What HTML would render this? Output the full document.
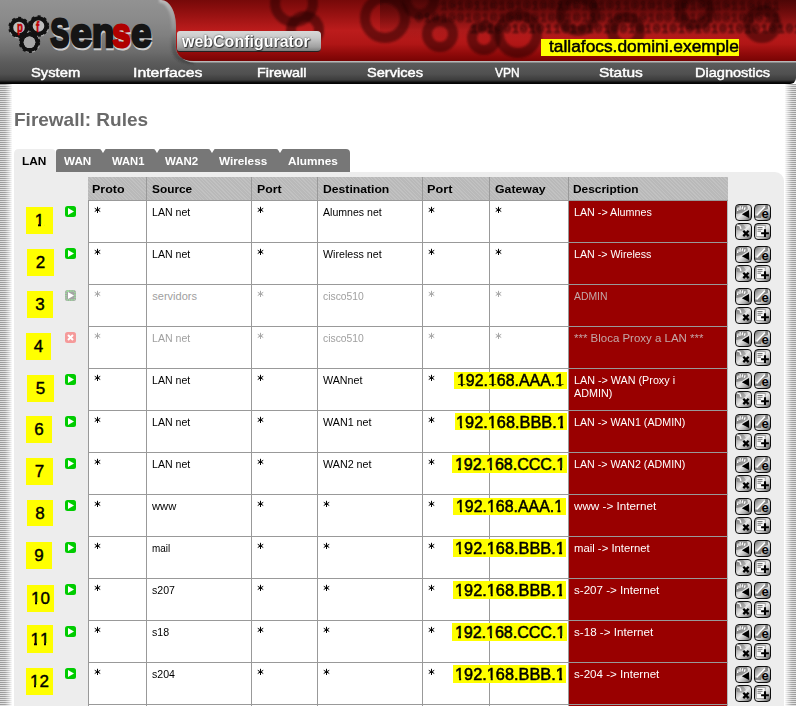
<!DOCTYPE html><html><head><meta charset="utf-8"><style>
*{margin:0;padding:0;box-sizing:border-box}
html,body{width:796px;height:706px;overflow:hidden;background:#fff;font-family:"Liberation Sans",sans-serif}
.a{position:absolute}
#hdr{left:0;top:0;width:796px;height:84px;overflow:hidden;border-radius:0 0 6px 0;
 background:linear-gradient(#929292 0px,#8a8a8a 20px,#808080 35px,#6c6c6c 52px,#5c5c5c 62px,#505050 74px,#3c3c3c 80px,#0a0a0a 82.5px,#000 84px)}
.nv{top:63.5px;color:#fff;-webkit-text-stroke:0.45px #fff;font-size:13px;line-height:17px;white-space:nowrap;transform-origin:0 0}
#host{left:541px;top:39px;width:198px;height:17px;background:#ff0}
#hostt{left:549px;top:37px;-webkit-text-stroke:0.5px #000;color:#000;font-size:17px;line-height:20px;white-space:nowrap;transform-origin:0 0}
.stl{top:84px;width:13px;height:622px;background:repeating-linear-gradient(#9a9a9a 0px,#9a9a9a 1px,#dedede 1px,#dedede 2px)}
.stl:after{content:"";position:absolute;left:0;top:0;right:0;bottom:0}
#stL{left:0}
#stL:after{background:linear-gradient(90deg,rgba(255,255,255,0) 0px,rgba(255,255,255,.08) 5px,rgba(255,255,255,.5) 9px,#fff 12.5px)}
#stR{left:784px;width:12px}
#stR:after{background:linear-gradient(270deg,rgba(255,255,255,0) 0px,rgba(255,255,255,.1) 4px,rgba(255,255,255,.55) 8px,#fff 11.5px)}
#title{left:13.5px;top:110px;font-size:18.5px;font-weight:bold;color:#6a6a6a;line-height:20px;white-space:nowrap;transform-origin:0 0}
#cont{left:14px;top:172px;width:770px;height:600px;background:#ededed;border-radius:0 9px 0 0}
.tt{top:154px;color:#fff;font-size:11.5px;font-weight:bold;line-height:14px;white-space:nowrap;transform-origin:0 0}
.th{top:177px;height:24px;background:repeating-linear-gradient(45deg,#c2c2c2 0px,#c2c2c2 1px,#b9b9b9 1px,#b9b9b9 2.5px);border-bottom:1px solid #999}
.thl{border-left:1px solid #999}
.htx{top:182px;font-size:11.5px;font-weight:bold;color:#000;line-height:14px;white-space:nowrap;transform-origin:0 0}
.td{height:42px;background:#fff;border-left:1px solid #999;border-bottom:1px solid #999}
.desc{background:#990000}
.tx{font-size:11px;color:#000;line-height:13px;white-space:nowrap;transform:scaleX(0.97);transform-origin:0 0}
.ast{font-size:15px;color:#000;line-height:15px}
.dis{color:#a0a0a0}
.dtx{color:#fff}
.dtx.dis{color:#c4a8a8}
.lbl{width:27px;height:27px;background:#ff0;color:#000;font-size:17px;line-height:27px;text-align:center;-webkit-text-stroke:0.4px #000}
.gw{height:17px;background:#ff0}
.gwt{color:#000;font-size:16px;line-height:17px;white-space:nowrap;-webkit-text-stroke:0.5px #000}
.one{position:relative;display:inline-block}
.one:before,.one:after{content:"";position:absolute;background:#ff0;height:0.18em}
.one:before{left:0.02em;width:0.2em}
.one:after{left:0.365em;width:0.2em}
.lbl .one:before,.lbl .one:after{top:17.0px}
.gwt .one:before,.gwt .one:after{top:12.4px}
.ai{width:17px;height:17px;border-radius:4px;border:1.6px solid #0e0e0e;background:linear-gradient(135deg,#707070 0%,#b4b4b4 25%,#e8e8e8 50%,#b0b0b0 75%,#505050 100%)}
.ai svg{position:absolute;left:-1.6px;top:-1.6px}
</style></head><body>
<div id="hdr" class="a">
<svg class="a" style="left:0;top:0" width="796" height="84" viewBox="0 0 796 84">
<defs>
<linearGradient id="rg" x1="0" y1="0" x2="0" y2="1">
<stop offset="0" stop-color="#760909"/><stop offset=".2" stop-color="#921010"/><stop offset=".5" stop-color="#bc1c1c"/><stop offset=".72" stop-color="#b01616"/><stop offset=".88" stop-color="#900a0a"/><stop offset="1" stop-color="#780404"/>
</linearGradient>
<filter id="bl" x="-10%" y="-50%" width="120%" height="200%"><feGaussianBlur stdDeviation="1.2"/></filter><linearGradient id="dk" x1="0" y1="0" x2="0" y2="1"><stop offset="0" stop-color="#000" stop-opacity=".35"/><stop offset="1" stop-color="#000" stop-opacity="0"/></linearGradient><filter id="bl2" x="-5%" y="-50%" width="110%" height="200%"><feGaussianBlur stdDeviation="0.9"/></filter><filter id="bl3" x="-50%" y="-50%" width="200%" height="200%"><feGaussianBlur stdDeviation="2.5"/></filter><linearGradient id="rim" gradientUnits="userSpaceOnUse" x1="0" y1="0" x2="0" y2="62"><stop offset="0" stop-color="#c4c4c4" stop-opacity=".8"/><stop offset=".45" stop-color="#a0a0a0" stop-opacity=".5"/><stop offset=".7" stop-color="#404040" stop-opacity=".35"/><stop offset="1" stop-color="#303030" stop-opacity=".5"/></linearGradient><clipPath id="rc"><path d="M161 0 C170 0 176 12 176 26 L176 47 C176 55 182 61 194 61 L796 61 L796 0 Z"/></clipPath>
</defs>
<path d="M159 0 C168 0 174 12 174 26 L174 47 C174 56 181 62 194 62" fill="none" stroke="url(#rim)" stroke-width="5" filter="url(#bl2)"/>
<path d="M163 0 C172 0 178 12 178 26 L178 47 C178 56 184 62.5 194 62.5 L796 62.5 L796 61 L194 61 C182 61 176 55 176 47 L176 26 C176 12 170 0 161 0Z" fill="#cfcfcf" opacity=".8"/>
<g clip-path="url(#rc)">
<rect x="150" y="0" width="646" height="61" fill="url(#rg)"/>
<rect x="380" y="0" width="420" height="40" fill="url(#dk)"/>
<g filter="url(#bl)">
<g fill="none" stroke="#240000" stroke-opacity=".5" stroke-width="10">
<circle cx="294" cy="3" r="19"/><circle cx="305" cy="30" r="14"/><circle cx="385" cy="18" r="20"/><circle cx="420" cy="0" r="14"/>
<circle cx="440" cy="34" r="13"/><circle cx="484" cy="38" r="12"/><circle cx="518" cy="34" r="19"/><circle cx="578" cy="14" r="17"/><circle cx="626" cy="31" r="14"/><circle cx="695" cy="10" r="15"/><circle cx="762" cy="24" r="14"/>
</g>
</g>
<g fill="#140000" fill-opacity=".55" font-family="Liberation Mono" font-weight="bold" font-size="13" letter-spacing="0.5" filter="url(#bl2)">
<text x="440" y="10">10101101010100110101011010101010110110101</text>
<text x="415" y="22">01010010101001010010110101101001010100101011</text>
<text x="470" y="33" fill-opacity=".7">10100101011010101001010101010101010101011</text>
</g>
</g>
</svg>
<svg class="a" style="left:0;top:0" width="176" height="62" viewBox="0 0 176 62">
<g fill="none" stroke="#d8d8d8" stroke-opacity=".55" stroke-width="2"><circle cx="19.2" cy="28.7" r="9"/><circle cx="38.9" cy="27" r="9"/><circle cx="30.2" cy="42.9" r="9"/></g>
<g fill="#bdbdbd" stroke="#121212" stroke-width="4">
<circle cx="19" cy="27.5" r="7.8"/><circle cx="38.5" cy="26" r="7.8"/><circle cx="29.5" cy="42.3" r="7.8"/></g>
<g fill="none" stroke="#121212" stroke-width="2.2" stroke-dasharray="3 3.3"><circle cx="19" cy="27.5" r="9.6"/><circle cx="38.5" cy="26" r="9.6"/><circle cx="29.5" cy="42.3" r="9.6"/></g>
<circle cx="29.5" cy="42.3" r="5.8" fill="#a8a8a8"/>
<g fill="#c00000" stroke="#c00000" stroke-width=".5" font-family="Liberation Sans" font-weight="bold" font-size="12"><text x="0" y="0" transform="translate(17,32) scale(0.8,1.15)">p</text><text x="0" y="0" transform="translate(36,31.5) scale(0.8,1.15)">f</text></g>
<text transform="translate(51.16,48.90) scale(0.281,0.4)" x="0" y="0" font-family="Liberation Sans" font-weight="bold" font-size="100" fill="#cfcfcf" stroke="#cfcfcf" stroke-width="2.6" vector-effect="non-scaling-stroke">S</text><text transform="translate(71.10,48.90) scale(0.383,0.404)" x="0" y="0" font-family="Liberation Sans" font-weight="bold" font-size="100" fill="#cfcfcf" stroke="#cfcfcf" stroke-width="2.6" vector-effect="non-scaling-stroke">e</text><text transform="translate(92.55,48.90) scale(0.364,0.404)" x="0" y="0" font-family="Liberation Sans" font-weight="bold" font-size="100" fill="#cfcfcf" stroke="#cfcfcf" stroke-width="2.6" vector-effect="non-scaling-stroke">n</text><text transform="translate(112.90,48.90) scale(0.33,0.404)" x="0" y="0" font-family="Liberation Sans" font-weight="bold" font-size="100" fill="#cfcfcf" stroke="#cfcfcf" stroke-width="2.6" vector-effect="non-scaling-stroke">s</text><text transform="translate(131.90,48.90) scale(0.364,0.404)" x="0" y="0" font-family="Liberation Sans" font-weight="bold" font-size="100" fill="#cfcfcf" stroke="#cfcfcf" stroke-width="2.6" vector-effect="non-scaling-stroke">e</text><text transform="translate(50.56,47.30) scale(0.281,0.4)" x="0" y="0" font-family="Liberation Sans" font-weight="bold" font-size="100" fill="#151515" stroke="#151515" stroke-width="2.6" vector-effect="non-scaling-stroke">S</text><text transform="translate(70.50,47.30) scale(0.383,0.404)" x="0" y="0" font-family="Liberation Sans" font-weight="bold" font-size="100" fill="#151515" stroke="#151515" stroke-width="2.6" vector-effect="non-scaling-stroke">e</text><text transform="translate(91.95,47.30) scale(0.364,0.404)" x="0" y="0" font-family="Liberation Sans" font-weight="bold" font-size="100" fill="#151515" stroke="#151515" stroke-width="2.6" vector-effect="non-scaling-stroke">n</text><text transform="translate(112.30,47.30) scale(0.33,0.404)" x="0" y="0" font-family="Liberation Sans" font-weight="bold" font-size="100" fill="#b00000" stroke="#b00000" stroke-width="2.6" vector-effect="non-scaling-stroke">s</text><text transform="translate(131.30,47.30) scale(0.364,0.404)" x="0" y="0" font-family="Liberation Sans" font-weight="bold" font-size="100" fill="#151515" stroke="#151515" stroke-width="2.6" vector-effect="non-scaling-stroke">e</text>
</svg>
<div class="a" style="left:177px;top:31px;width:144px;height:21px;border-radius:3px 4px 4px 3px;background:linear-gradient(#d8d8d8,#c8c8c8 35%,#a0a0a0 80%,#7c7c7c);border-bottom:1px solid #222"></div>
<div class="a" style="left:182px;top:32px;font-size:17px;font-weight:bold;color:#fff;line-height:19px;text-shadow:0 0 1.5px #222,1px 1px 1px #333;transform:scaleX(0.94);transform-origin:0 0;white-space:nowrap">webConfigurator</div>
<div class="a nv" style="left:30.8px;transform:scaleX(1.136)">System</div>
<div class="a nv" style="left:133.4px;transform:scaleX(1.215)">Interfaces</div>
<div class="a nv" style="left:256.7px;transform:scaleX(1.103)">Firewall</div>
<div class="a nv" style="left:366.7px;transform:scaleX(1.124)">Services</div>
<div class="a nv" style="left:495.0px;transform:scaleX(0.918)">VPN</div>
<div class="a nv" style="left:598.7px;transform:scaleX(1.190)">Status</div>
<div class="a nv" style="left:695.2px;transform:scaleX(1.118)">Diagnostics</div>
<div id="host" class="a"></div><div id="hostt" class="a" style="transform:scaleX(1.02)">tallafocs.domini.exemple</div>
</div>
<div id="stL" class="a stl"></div><div id="stR" class="a stl"></div>
<div id="title" class="a" style="transform:scaleX(1.027)">Firewall: Rules</div>
<div id="cont" class="a"></div>
<svg class="a" style="left:0;top:140px" width="360" height="40" viewBox="0 140 360 40"><path d="M14 172 L14 154 Q14 149 19 149 L51 149 Q56 149 56 154 L56 172Z" fill="#ededed"/><path d="M56 172 L56 152 Q56 149 59 149 L99 149 Q103 149 103 153 L103 172Z" fill="#777"/><path d="M103 172 L103 152 Q103 149 106 149 L153 149 Q157 149 157 153 L157 172Z" fill="#777"/><path d="M157 172 L157 152 Q157 149 160 149 L208 149 Q212 149 212 153 L212 172Z" fill="#777"/><path d="M212 172 L212 152 Q212 149 215 149 L276 149 Q280 149 280 153 L280 172Z" fill="#777"/><path d="M280 172 L280 152 Q280 149 283 149 L346 149 Q350 149 350 153 L350 172Z" fill="#777"/><path d="M100.5 149 L105.5 149 L103 153Z" fill="#fff"/><path d="M154.5 149 L159.5 149 L157 153Z" fill="#fff"/><path d="M209.5 149 L214.5 149 L212 153Z" fill="#fff"/><path d="M277.5 149 L282.5 149 L280 153Z" fill="#fff"/></svg>
<div class="a tt" style="left:21.5px;transform:scaleX(1.032);color:#000">LAN</div>
<div class="a tt" style="left:64.1px;transform:scaleX(1.017)">WAN</div>
<div class="a tt" style="left:111.6px;transform:scaleX(0.975)">WAN1</div>
<div class="a tt" style="left:165.3px;transform:scaleX(0.999)">WAN2</div>
<div class="a tt" style="left:219.3px;transform:scaleX(1.021)">Wireless</div>
<div class="a tt" style="left:288.0px;transform:scaleX(1.027)">Alumnes</div>
<div class="a th" style="left:88px;width:58px"></div>
<div class="a th thl" style="left:146px;width:105px"></div>
<div class="a th thl" style="left:251px;width:66px"></div>
<div class="a th thl" style="left:317px;width:105px"></div>
<div class="a th thl" style="left:422px;width:67px"></div>
<div class="a th thl" style="left:489px;width:79px"></div>
<div class="a th thl" style="left:568px;width:160px"></div>
<div class="a htx" style="left:92.1px;transform:scaleX(1.086)">Proto</div>
<div class="a htx" style="left:151.6px;transform:scaleX(1.031)">Source</div>
<div class="a htx" style="left:256.9px;transform:scaleX(1.070)">Port</div>
<div class="a htx" style="left:322.5px;transform:scaleX(1.059)">Destination</div>
<div class="a htx" style="left:427.3px;transform:scaleX(1.104)">Port</div>
<div class="a htx" style="left:494.5px;transform:scaleX(1.069)">Gateway</div>
<div class="a htx" style="left:573.3px;transform:scaleX(1.035)">Description</div>
<div class="a td" style="left:88px;top:705px;width:58px"></div>
<div class="a td" style="left:146px;top:705px;width:105px"></div>
<div class="a td" style="left:251px;top:705px;width:66px"></div>
<div class="a td" style="left:317px;top:705px;width:105px"></div>
<div class="a td" style="left:422px;top:705px;width:67px"></div>
<div class="a td" style="left:489px;top:705px;width:79px"></div>
<div class="a td desc" style="left:568px;top:705px;width:160px;border-right:1px solid #b0bcbc"></div>
<div class="a td" style="left:88px;top:201px;width:58px"></div>
<div class="a td" style="left:146px;top:201px;width:105px"></div>
<div class="a td" style="left:251px;top:201px;width:66px"></div>
<div class="a td" style="left:317px;top:201px;width:105px"></div>
<div class="a td" style="left:422px;top:201px;width:67px"></div>
<div class="a td" style="left:489px;top:201px;width:79px"></div>
<div class="a td desc" style="left:568px;top:201px;width:160px;border-right:1px solid #b0bcbc"></div>
<svg class="a" style="left:94px;top:206px" width="7" height="8"><path d="M3.5 1.2V6.6M1.1 2.5L5.9 5.3M1.1 5.3L5.9 2.5" stroke="#000" stroke-width="1.0" stroke-linecap="round"/></svg>
<div class="a tx" style="left:152.3px;top:206px;transform:scaleX(0.962)">LAN net</div>
<svg class="a" style="left:257px;top:206px" width="7" height="8"><path d="M3.5 1.2V6.6M1.1 2.5L5.9 5.3M1.1 5.3L5.9 2.5" stroke="#000" stroke-width="1.0" stroke-linecap="round"/></svg>
<div class="a tx" style="left:323.3px;top:206px;transform:scaleX(0.961)">Alumnes net</div>
<svg class="a" style="left:428px;top:206px" width="7" height="8"><path d="M3.5 1.2V6.6M1.1 2.5L5.9 5.3M1.1 5.3L5.9 2.5" stroke="#000" stroke-width="1.0" stroke-linecap="round"/></svg>
<svg class="a" style="left:495px;top:206px" width="7" height="8"><path d="M3.5 1.2V6.6M1.1 2.5L5.9 5.3M1.1 5.3L5.9 2.5" stroke="#000" stroke-width="1.0" stroke-linecap="round"/></svg>
<div class="a tx dtx" style="left:573.8px;top:206px;width:150px;white-space:normal;transform:scaleX(0.975)">LAN -&gt; Alumnes</div>
<div class="a lbl" style="left:26px;top:207px;width:27px;height:27px;padding-top:0px"><span class=one>1</span></div>
<svg class="a" style="left:65px;top:206px" width="11" height="11"><rect width="11" height="11" rx="2.5" fill="#00cc00"/><path d="M3 2 L9 5.5 L3 9Z" fill="#fff"/></svg>
<div class="a ai" style="left:735px;top:204px"><svg width="17" height="17" viewBox="0 0 17 17"><path d="M1.5 3 L13 2 L14 6 L8 10 L2 11 Z" fill="#6a6a6a" opacity=".6"/><path d="M3.6 8 L4.2 4.5 M5.8 6.8 L6.3 3.2 M8 6.3 L8.7 3.3 M10.2 6.8 L11.2 4.3" stroke="#fff" stroke-width="1.3" fill="none"/><path d="M7.8 11.3 L15 7.1 L15 15.1Z" fill="#000"/></svg></div>
<div class="a ai" style="left:754px;top:204px"><svg width="17" height="17" viewBox="0 0 17 17"><path d="M2 13 L6 9 L9 5 L13 2 L15 2 L15 6 L10 8 L8 15 L2 15Z" fill="#3a3a3a" opacity=".55"/><path d="M3.5 12.5 L12 3.5" stroke="#fff" stroke-width="1.8"/><text x="8.4" y="14.8" font-size="13" font-weight="bold" font-family="Liberation Sans" fill="#000">e</text></svg></div>
<div class="a ai" style="left:735px;top:223px"><svg width="17" height="17" viewBox="0 0 17 17"><path d="M2 2 L9 2 L12 6 L8 9 L3 8Z" fill="#777" opacity=".45"/><path d="M3 3 L6 4 L7 7" stroke="#fff" stroke-width="1.2" fill="none"/><path d="M9.3 8.7L14.6 14.1M14.6 8.7L9.3 14.1" stroke="#000" stroke-width="2.3"/></svg></div>
<div class="a ai" style="left:754px;top:223px"><svg width="17" height="17" viewBox="0 0 17 17"><rect x="3.2" y="3.5" width="9" height="11" fill="#fafafa" stroke="#999" stroke-width=".8"/><path d="M4.5 5.5H9.5M4.5 7.3H9.5M4.5 9.2H8" stroke="#777" stroke-width="1"/><path d="M8.1 11.2H15.9M12 7.2V15.1" stroke="#000" stroke-width="2.1"/></svg></div>
<div class="a td" style="left:88px;top:243px;width:58px"></div>
<div class="a td" style="left:146px;top:243px;width:105px"></div>
<div class="a td" style="left:251px;top:243px;width:66px"></div>
<div class="a td" style="left:317px;top:243px;width:105px"></div>
<div class="a td" style="left:422px;top:243px;width:67px"></div>
<div class="a td" style="left:489px;top:243px;width:79px"></div>
<div class="a td desc" style="left:568px;top:243px;width:160px;border-right:1px solid #b0bcbc"></div>
<svg class="a" style="left:94px;top:248px" width="7" height="8"><path d="M3.5 1.2V6.6M1.1 2.5L5.9 5.3M1.1 5.3L5.9 2.5" stroke="#000" stroke-width="1.0" stroke-linecap="round"/></svg>
<div class="a tx" style="left:152.3px;top:248px;transform:scaleX(0.962)">LAN net</div>
<svg class="a" style="left:257px;top:248px" width="7" height="8"><path d="M3.5 1.2V6.6M1.1 2.5L5.9 5.3M1.1 5.3L5.9 2.5" stroke="#000" stroke-width="1.0" stroke-linecap="round"/></svg>
<div class="a tx" style="left:323.3px;top:248px;transform:scaleX(0.969)">Wireless net</div>
<svg class="a" style="left:428px;top:248px" width="7" height="8"><path d="M3.5 1.2V6.6M1.1 2.5L5.9 5.3M1.1 5.3L5.9 2.5" stroke="#000" stroke-width="1.0" stroke-linecap="round"/></svg>
<svg class="a" style="left:495px;top:248px" width="7" height="8"><path d="M3.5 1.2V6.6M1.1 2.5L5.9 5.3M1.1 5.3L5.9 2.5" stroke="#000" stroke-width="1.0" stroke-linecap="round"/></svg>
<div class="a tx dtx" style="left:573.8px;top:248px;width:150px;white-space:normal;transform:scaleX(0.97)">LAN -&gt; Wireless</div>
<div class="a lbl" style="left:27px;top:249px;width:27px;height:27px;padding-top:0px">2</div>
<svg class="a" style="left:65px;top:248px" width="11" height="11"><rect width="11" height="11" rx="2.5" fill="#00cc00"/><path d="M3 2 L9 5.5 L3 9Z" fill="#fff"/></svg>
<div class="a ai" style="left:735px;top:246px"><svg width="17" height="17" viewBox="0 0 17 17"><path d="M1.5 3 L13 2 L14 6 L8 10 L2 11 Z" fill="#6a6a6a" opacity=".6"/><path d="M3.6 8 L4.2 4.5 M5.8 6.8 L6.3 3.2 M8 6.3 L8.7 3.3 M10.2 6.8 L11.2 4.3" stroke="#fff" stroke-width="1.3" fill="none"/><path d="M7.8 11.3 L15 7.1 L15 15.1Z" fill="#000"/></svg></div>
<div class="a ai" style="left:754px;top:246px"><svg width="17" height="17" viewBox="0 0 17 17"><path d="M2 13 L6 9 L9 5 L13 2 L15 2 L15 6 L10 8 L8 15 L2 15Z" fill="#3a3a3a" opacity=".55"/><path d="M3.5 12.5 L12 3.5" stroke="#fff" stroke-width="1.8"/><text x="8.4" y="14.8" font-size="13" font-weight="bold" font-family="Liberation Sans" fill="#000">e</text></svg></div>
<div class="a ai" style="left:735px;top:265px"><svg width="17" height="17" viewBox="0 0 17 17"><path d="M2 2 L9 2 L12 6 L8 9 L3 8Z" fill="#777" opacity=".45"/><path d="M3 3 L6 4 L7 7" stroke="#fff" stroke-width="1.2" fill="none"/><path d="M9.3 8.7L14.6 14.1M14.6 8.7L9.3 14.1" stroke="#000" stroke-width="2.3"/></svg></div>
<div class="a ai" style="left:754px;top:265px"><svg width="17" height="17" viewBox="0 0 17 17"><rect x="3.2" y="3.5" width="9" height="11" fill="#fafafa" stroke="#999" stroke-width=".8"/><path d="M4.5 5.5H9.5M4.5 7.3H9.5M4.5 9.2H8" stroke="#777" stroke-width="1"/><path d="M8.1 11.2H15.9M12 7.2V15.1" stroke="#000" stroke-width="2.1"/></svg></div>
<div class="a td" style="left:88px;top:285px;width:58px"></div>
<div class="a td" style="left:146px;top:285px;width:105px"></div>
<div class="a td" style="left:251px;top:285px;width:66px"></div>
<div class="a td" style="left:317px;top:285px;width:105px"></div>
<div class="a td" style="left:422px;top:285px;width:67px"></div>
<div class="a td" style="left:489px;top:285px;width:79px"></div>
<div class="a td desc" style="left:568px;top:285px;width:160px;border-right:1px solid #b0bcbc"></div>
<svg class="a" style="left:94px;top:290px" width="7" height="8"><path d="M3.5 1.2V6.6M1.1 2.5L5.9 5.3M1.1 5.3L5.9 2.5" stroke="#a8a8a8" stroke-width="1.0" stroke-linecap="round"/></svg>
<div class="a tx dis" style="left:152.3px;top:290px;transform:scaleX(1.0)">servidors</div>
<svg class="a" style="left:257px;top:290px" width="7" height="8"><path d="M3.5 1.2V6.6M1.1 2.5L5.9 5.3M1.1 5.3L5.9 2.5" stroke="#a8a8a8" stroke-width="1.0" stroke-linecap="round"/></svg>
<div class="a tx dis" style="left:323.3px;top:290px;transform:scaleX(0.94)">cisco510</div>
<svg class="a" style="left:428px;top:290px" width="7" height="8"><path d="M3.5 1.2V6.6M1.1 2.5L5.9 5.3M1.1 5.3L5.9 2.5" stroke="#a8a8a8" stroke-width="1.0" stroke-linecap="round"/></svg>
<svg class="a" style="left:495px;top:290px" width="7" height="8"><path d="M3.5 1.2V6.6M1.1 2.5L5.9 5.3M1.1 5.3L5.9 2.5" stroke="#a8a8a8" stroke-width="1.0" stroke-linecap="round"/></svg>
<div class="a tx dtx dis" style="left:573.8px;top:290px;width:150px;white-space:normal;transform:scaleX(0.946)">ADMIN</div>
<div class="a lbl" style="left:27px;top:291px;width:26px;height:27px;padding-top:0px">3</div>
<svg class="a" style="left:65px;top:290px" width="11" height="11"><rect width="11" height="11" rx="2.5" fill="#a4a4a4"/><rect x="1" y="1" width="9" height="9" rx="2" fill="none" stroke="#9e9" stroke-width="1.3" stroke-dasharray="1.3 1"/><path d="M3 2 L9 5.5 L3 9Z" fill="#fff"/></svg>
<div class="a ai" style="left:735px;top:288px"><svg width="17" height="17" viewBox="0 0 17 17"><path d="M1.5 3 L13 2 L14 6 L8 10 L2 11 Z" fill="#6a6a6a" opacity=".6"/><path d="M3.6 8 L4.2 4.5 M5.8 6.8 L6.3 3.2 M8 6.3 L8.7 3.3 M10.2 6.8 L11.2 4.3" stroke="#fff" stroke-width="1.3" fill="none"/><path d="M7.8 11.3 L15 7.1 L15 15.1Z" fill="#000"/></svg></div>
<div class="a ai" style="left:754px;top:288px"><svg width="17" height="17" viewBox="0 0 17 17"><path d="M2 13 L6 9 L9 5 L13 2 L15 2 L15 6 L10 8 L8 15 L2 15Z" fill="#3a3a3a" opacity=".55"/><path d="M3.5 12.5 L12 3.5" stroke="#fff" stroke-width="1.8"/><text x="8.4" y="14.8" font-size="13" font-weight="bold" font-family="Liberation Sans" fill="#000">e</text></svg></div>
<div class="a ai" style="left:735px;top:307px"><svg width="17" height="17" viewBox="0 0 17 17"><path d="M2 2 L9 2 L12 6 L8 9 L3 8Z" fill="#777" opacity=".45"/><path d="M3 3 L6 4 L7 7" stroke="#fff" stroke-width="1.2" fill="none"/><path d="M9.3 8.7L14.6 14.1M14.6 8.7L9.3 14.1" stroke="#000" stroke-width="2.3"/></svg></div>
<div class="a ai" style="left:754px;top:307px"><svg width="17" height="17" viewBox="0 0 17 17"><rect x="3.2" y="3.5" width="9" height="11" fill="#fafafa" stroke="#999" stroke-width=".8"/><path d="M4.5 5.5H9.5M4.5 7.3H9.5M4.5 9.2H8" stroke="#777" stroke-width="1"/><path d="M8.1 11.2H15.9M12 7.2V15.1" stroke="#000" stroke-width="2.1"/></svg></div>
<div class="a td" style="left:88px;top:327px;width:58px"></div>
<div class="a td" style="left:146px;top:327px;width:105px"></div>
<div class="a td" style="left:251px;top:327px;width:66px"></div>
<div class="a td" style="left:317px;top:327px;width:105px"></div>
<div class="a td" style="left:422px;top:327px;width:67px"></div>
<div class="a td" style="left:489px;top:327px;width:79px"></div>
<div class="a td desc" style="left:568px;top:327px;width:160px;border-right:1px solid #b0bcbc"></div>
<svg class="a" style="left:94px;top:332px" width="7" height="8"><path d="M3.5 1.2V6.6M1.1 2.5L5.9 5.3M1.1 5.3L5.9 2.5" stroke="#a8a8a8" stroke-width="1.0" stroke-linecap="round"/></svg>
<div class="a tx dis" style="left:152.3px;top:332px;transform:scaleX(0.962)">LAN net</div>
<svg class="a" style="left:257px;top:332px" width="7" height="8"><path d="M3.5 1.2V6.6M1.1 2.5L5.9 5.3M1.1 5.3L5.9 2.5" stroke="#a8a8a8" stroke-width="1.0" stroke-linecap="round"/></svg>
<div class="a tx dis" style="left:323.3px;top:332px;transform:scaleX(0.94)">cisco510</div>
<svg class="a" style="left:428px;top:332px" width="7" height="8"><path d="M3.5 1.2V6.6M1.1 2.5L5.9 5.3M1.1 5.3L5.9 2.5" stroke="#a8a8a8" stroke-width="1.0" stroke-linecap="round"/></svg>
<svg class="a" style="left:495px;top:332px" width="7" height="8"><path d="M3.5 1.2V6.6M1.1 2.5L5.9 5.3M1.1 5.3L5.9 2.5" stroke="#a8a8a8" stroke-width="1.0" stroke-linecap="round"/></svg>
<div class="a tx dtx dis" style="left:573.8px;top:332px;width:150px;white-space:normal;transform:scaleX(1.043)">*** Bloca Proxy a LAN ***</div>
<div class="a lbl" style="left:26px;top:333px;width:25px;height:27px;padding-top:0px">4</div>
<svg class="a" style="left:65px;top:332px" width="11" height="11"><rect width="11" height="11" rx="2.5" fill="#f59a9a"/><path d="M3 3L8 8M8 3L3 8" stroke="#fff" stroke-width="2"/></svg>
<div class="a ai" style="left:735px;top:330px"><svg width="17" height="17" viewBox="0 0 17 17"><path d="M1.5 3 L13 2 L14 6 L8 10 L2 11 Z" fill="#6a6a6a" opacity=".6"/><path d="M3.6 8 L4.2 4.5 M5.8 6.8 L6.3 3.2 M8 6.3 L8.7 3.3 M10.2 6.8 L11.2 4.3" stroke="#fff" stroke-width="1.3" fill="none"/><path d="M7.8 11.3 L15 7.1 L15 15.1Z" fill="#000"/></svg></div>
<div class="a ai" style="left:754px;top:330px"><svg width="17" height="17" viewBox="0 0 17 17"><path d="M2 13 L6 9 L9 5 L13 2 L15 2 L15 6 L10 8 L8 15 L2 15Z" fill="#3a3a3a" opacity=".55"/><path d="M3.5 12.5 L12 3.5" stroke="#fff" stroke-width="1.8"/><text x="8.4" y="14.8" font-size="13" font-weight="bold" font-family="Liberation Sans" fill="#000">e</text></svg></div>
<div class="a ai" style="left:735px;top:349px"><svg width="17" height="17" viewBox="0 0 17 17"><path d="M2 2 L9 2 L12 6 L8 9 L3 8Z" fill="#777" opacity=".45"/><path d="M3 3 L6 4 L7 7" stroke="#fff" stroke-width="1.2" fill="none"/><path d="M9.3 8.7L14.6 14.1M14.6 8.7L9.3 14.1" stroke="#000" stroke-width="2.3"/></svg></div>
<div class="a ai" style="left:754px;top:349px"><svg width="17" height="17" viewBox="0 0 17 17"><rect x="3.2" y="3.5" width="9" height="11" fill="#fafafa" stroke="#999" stroke-width=".8"/><path d="M4.5 5.5H9.5M4.5 7.3H9.5M4.5 9.2H8" stroke="#777" stroke-width="1"/><path d="M8.1 11.2H15.9M12 7.2V15.1" stroke="#000" stroke-width="2.1"/></svg></div>
<div class="a td" style="left:88px;top:369px;width:58px"></div>
<div class="a td" style="left:146px;top:369px;width:105px"></div>
<div class="a td" style="left:251px;top:369px;width:66px"></div>
<div class="a td" style="left:317px;top:369px;width:105px"></div>
<div class="a td" style="left:422px;top:369px;width:67px"></div>
<div class="a td" style="left:489px;top:369px;width:79px"></div>
<div class="a td desc" style="left:568px;top:369px;width:160px;border-right:1px solid #b0bcbc"></div>
<svg class="a" style="left:94px;top:374px" width="7" height="8"><path d="M3.5 1.2V6.6M1.1 2.5L5.9 5.3M1.1 5.3L5.9 2.5" stroke="#000" stroke-width="1.0" stroke-linecap="round"/></svg>
<div class="a tx" style="left:152.3px;top:374px;transform:scaleX(0.962)">LAN net</div>
<svg class="a" style="left:257px;top:374px" width="7" height="8"><path d="M3.5 1.2V6.6M1.1 2.5L5.9 5.3M1.1 5.3L5.9 2.5" stroke="#000" stroke-width="1.0" stroke-linecap="round"/></svg>
<div class="a tx" style="left:323.3px;top:374px;transform:scaleX(0.973)">WANnet</div>
<svg class="a" style="left:428px;top:374px" width="7" height="8"><path d="M3.5 1.2V6.6M1.1 2.5L5.9 5.3M1.1 5.3L5.9 2.5" stroke="#000" stroke-width="1.0" stroke-linecap="round"/></svg>
<div class="a tx dtx" style="left:573.8px;top:374px;width:150px;white-space:normal;transform:scaleX(0.979)">LAN -&gt; WAN (Proxy i<br>ADMIN)</div>
<div class="a lbl" style="left:27px;top:375px;width:27px;height:27px;padding-top:0px">5</div>
<div class="a gw" style="left:454px;top:372px;width:113px;height:17px"></div>
<div class="a gwt" style="left:456.7px;top:372.2px;transform:scaleX(0.995);transform-origin:0 0"><span class=one>1</span>92.<span class=one>1</span>68.AAA.<span class=one>1</span></div>
<svg class="a" style="left:65px;top:374px" width="11" height="11"><rect width="11" height="11" rx="2.5" fill="#00cc00"/><path d="M3 2 L9 5.5 L3 9Z" fill="#fff"/></svg>
<div class="a ai" style="left:735px;top:372px"><svg width="17" height="17" viewBox="0 0 17 17"><path d="M1.5 3 L13 2 L14 6 L8 10 L2 11 Z" fill="#6a6a6a" opacity=".6"/><path d="M3.6 8 L4.2 4.5 M5.8 6.8 L6.3 3.2 M8 6.3 L8.7 3.3 M10.2 6.8 L11.2 4.3" stroke="#fff" stroke-width="1.3" fill="none"/><path d="M7.8 11.3 L15 7.1 L15 15.1Z" fill="#000"/></svg></div>
<div class="a ai" style="left:754px;top:372px"><svg width="17" height="17" viewBox="0 0 17 17"><path d="M2 13 L6 9 L9 5 L13 2 L15 2 L15 6 L10 8 L8 15 L2 15Z" fill="#3a3a3a" opacity=".55"/><path d="M3.5 12.5 L12 3.5" stroke="#fff" stroke-width="1.8"/><text x="8.4" y="14.8" font-size="13" font-weight="bold" font-family="Liberation Sans" fill="#000">e</text></svg></div>
<div class="a ai" style="left:735px;top:391px"><svg width="17" height="17" viewBox="0 0 17 17"><path d="M2 2 L9 2 L12 6 L8 9 L3 8Z" fill="#777" opacity=".45"/><path d="M3 3 L6 4 L7 7" stroke="#fff" stroke-width="1.2" fill="none"/><path d="M9.3 8.7L14.6 14.1M14.6 8.7L9.3 14.1" stroke="#000" stroke-width="2.3"/></svg></div>
<div class="a ai" style="left:754px;top:391px"><svg width="17" height="17" viewBox="0 0 17 17"><rect x="3.2" y="3.5" width="9" height="11" fill="#fafafa" stroke="#999" stroke-width=".8"/><path d="M4.5 5.5H9.5M4.5 7.3H9.5M4.5 9.2H8" stroke="#777" stroke-width="1"/><path d="M8.1 11.2H15.9M12 7.2V15.1" stroke="#000" stroke-width="2.1"/></svg></div>
<div class="a td" style="left:88px;top:411px;width:58px"></div>
<div class="a td" style="left:146px;top:411px;width:105px"></div>
<div class="a td" style="left:251px;top:411px;width:66px"></div>
<div class="a td" style="left:317px;top:411px;width:105px"></div>
<div class="a td" style="left:422px;top:411px;width:67px"></div>
<div class="a td" style="left:489px;top:411px;width:79px"></div>
<div class="a td desc" style="left:568px;top:411px;width:160px;border-right:1px solid #b0bcbc"></div>
<svg class="a" style="left:94px;top:416px" width="7" height="8"><path d="M3.5 1.2V6.6M1.1 2.5L5.9 5.3M1.1 5.3L5.9 2.5" stroke="#000" stroke-width="1.0" stroke-linecap="round"/></svg>
<div class="a tx" style="left:152.3px;top:416px;transform:scaleX(0.962)">LAN net</div>
<svg class="a" style="left:257px;top:416px" width="7" height="8"><path d="M3.5 1.2V6.6M1.1 2.5L5.9 5.3M1.1 5.3L5.9 2.5" stroke="#000" stroke-width="1.0" stroke-linecap="round"/></svg>
<div class="a tx" style="left:323.3px;top:416px;transform:scaleX(0.976)">WAN1 net</div>
<svg class="a" style="left:428px;top:416px" width="7" height="8"><path d="M3.5 1.2V6.6M1.1 2.5L5.9 5.3M1.1 5.3L5.9 2.5" stroke="#000" stroke-width="1.0" stroke-linecap="round"/></svg>
<div class="a tx dtx" style="left:573.8px;top:416px;width:150px;white-space:normal;transform:scaleX(0.97)">LAN -&gt; WAN1 (ADMIN)</div>
<div class="a lbl" style="left:26px;top:416px;width:26px;height:27px;padding-top:0px">6</div>
<div class="a gw" style="left:455px;top:413px;width:112px;height:17px"></div>
<div class="a gwt" style="left:455.7px;top:413.9px;transform:scaleX(1.02);transform-origin:0 0"><span class=one>1</span>92.<span class=one>1</span>68.BBB.<span class=one>1</span></div>
<svg class="a" style="left:65px;top:416px" width="11" height="11"><rect width="11" height="11" rx="2.5" fill="#00cc00"/><path d="M3 2 L9 5.5 L3 9Z" fill="#fff"/></svg>
<div class="a ai" style="left:735px;top:414px"><svg width="17" height="17" viewBox="0 0 17 17"><path d="M1.5 3 L13 2 L14 6 L8 10 L2 11 Z" fill="#6a6a6a" opacity=".6"/><path d="M3.6 8 L4.2 4.5 M5.8 6.8 L6.3 3.2 M8 6.3 L8.7 3.3 M10.2 6.8 L11.2 4.3" stroke="#fff" stroke-width="1.3" fill="none"/><path d="M7.8 11.3 L15 7.1 L15 15.1Z" fill="#000"/></svg></div>
<div class="a ai" style="left:754px;top:414px"><svg width="17" height="17" viewBox="0 0 17 17"><path d="M2 13 L6 9 L9 5 L13 2 L15 2 L15 6 L10 8 L8 15 L2 15Z" fill="#3a3a3a" opacity=".55"/><path d="M3.5 12.5 L12 3.5" stroke="#fff" stroke-width="1.8"/><text x="8.4" y="14.8" font-size="13" font-weight="bold" font-family="Liberation Sans" fill="#000">e</text></svg></div>
<div class="a ai" style="left:735px;top:433px"><svg width="17" height="17" viewBox="0 0 17 17"><path d="M2 2 L9 2 L12 6 L8 9 L3 8Z" fill="#777" opacity=".45"/><path d="M3 3 L6 4 L7 7" stroke="#fff" stroke-width="1.2" fill="none"/><path d="M9.3 8.7L14.6 14.1M14.6 8.7L9.3 14.1" stroke="#000" stroke-width="2.3"/></svg></div>
<div class="a ai" style="left:754px;top:433px"><svg width="17" height="17" viewBox="0 0 17 17"><rect x="3.2" y="3.5" width="9" height="11" fill="#fafafa" stroke="#999" stroke-width=".8"/><path d="M4.5 5.5H9.5M4.5 7.3H9.5M4.5 9.2H8" stroke="#777" stroke-width="1"/><path d="M8.1 11.2H15.9M12 7.2V15.1" stroke="#000" stroke-width="2.1"/></svg></div>
<div class="a td" style="left:88px;top:453px;width:58px"></div>
<div class="a td" style="left:146px;top:453px;width:105px"></div>
<div class="a td" style="left:251px;top:453px;width:66px"></div>
<div class="a td" style="left:317px;top:453px;width:105px"></div>
<div class="a td" style="left:422px;top:453px;width:67px"></div>
<div class="a td" style="left:489px;top:453px;width:79px"></div>
<div class="a td desc" style="left:568px;top:453px;width:160px;border-right:1px solid #b0bcbc"></div>
<svg class="a" style="left:94px;top:458px" width="7" height="8"><path d="M3.5 1.2V6.6M1.1 2.5L5.9 5.3M1.1 5.3L5.9 2.5" stroke="#000" stroke-width="1.0" stroke-linecap="round"/></svg>
<div class="a tx" style="left:152.3px;top:458px;transform:scaleX(0.962)">LAN net</div>
<svg class="a" style="left:257px;top:458px" width="7" height="8"><path d="M3.5 1.2V6.6M1.1 2.5L5.9 5.3M1.1 5.3L5.9 2.5" stroke="#000" stroke-width="1.0" stroke-linecap="round"/></svg>
<div class="a tx" style="left:323.3px;top:458px;transform:scaleX(0.976)">WAN2 net</div>
<svg class="a" style="left:428px;top:458px" width="7" height="8"><path d="M3.5 1.2V6.6M1.1 2.5L5.9 5.3M1.1 5.3L5.9 2.5" stroke="#000" stroke-width="1.0" stroke-linecap="round"/></svg>
<div class="a tx dtx" style="left:573.8px;top:458px;width:150px;white-space:normal;transform:scaleX(0.97)">LAN -&gt; WAN2 (ADMIN)</div>
<div class="a lbl" style="left:26px;top:458px;width:27px;height:27px;padding-top:0px">7</div>
<div class="a gw" style="left:452px;top:455px;width:115px;height:18px"></div>
<div class="a gwt" style="left:454.9px;top:455.9px;transform:scaleX(1.0);transform-origin:0 0"><span class=one>1</span>92.<span class=one>1</span>68.CCC.<span class=one>1</span></div>
<svg class="a" style="left:65px;top:458px" width="11" height="11"><rect width="11" height="11" rx="2.5" fill="#00cc00"/><path d="M3 2 L9 5.5 L3 9Z" fill="#fff"/></svg>
<div class="a ai" style="left:735px;top:456px"><svg width="17" height="17" viewBox="0 0 17 17"><path d="M1.5 3 L13 2 L14 6 L8 10 L2 11 Z" fill="#6a6a6a" opacity=".6"/><path d="M3.6 8 L4.2 4.5 M5.8 6.8 L6.3 3.2 M8 6.3 L8.7 3.3 M10.2 6.8 L11.2 4.3" stroke="#fff" stroke-width="1.3" fill="none"/><path d="M7.8 11.3 L15 7.1 L15 15.1Z" fill="#000"/></svg></div>
<div class="a ai" style="left:754px;top:456px"><svg width="17" height="17" viewBox="0 0 17 17"><path d="M2 13 L6 9 L9 5 L13 2 L15 2 L15 6 L10 8 L8 15 L2 15Z" fill="#3a3a3a" opacity=".55"/><path d="M3.5 12.5 L12 3.5" stroke="#fff" stroke-width="1.8"/><text x="8.4" y="14.8" font-size="13" font-weight="bold" font-family="Liberation Sans" fill="#000">e</text></svg></div>
<div class="a ai" style="left:735px;top:475px"><svg width="17" height="17" viewBox="0 0 17 17"><path d="M2 2 L9 2 L12 6 L8 9 L3 8Z" fill="#777" opacity=".45"/><path d="M3 3 L6 4 L7 7" stroke="#fff" stroke-width="1.2" fill="none"/><path d="M9.3 8.7L14.6 14.1M14.6 8.7L9.3 14.1" stroke="#000" stroke-width="2.3"/></svg></div>
<div class="a ai" style="left:754px;top:475px"><svg width="17" height="17" viewBox="0 0 17 17"><rect x="3.2" y="3.5" width="9" height="11" fill="#fafafa" stroke="#999" stroke-width=".8"/><path d="M4.5 5.5H9.5M4.5 7.3H9.5M4.5 9.2H8" stroke="#777" stroke-width="1"/><path d="M8.1 11.2H15.9M12 7.2V15.1" stroke="#000" stroke-width="2.1"/></svg></div>
<div class="a td" style="left:88px;top:495px;width:58px"></div>
<div class="a td" style="left:146px;top:495px;width:105px"></div>
<div class="a td" style="left:251px;top:495px;width:66px"></div>
<div class="a td" style="left:317px;top:495px;width:105px"></div>
<div class="a td" style="left:422px;top:495px;width:67px"></div>
<div class="a td" style="left:489px;top:495px;width:79px"></div>
<div class="a td desc" style="left:568px;top:495px;width:160px;border-right:1px solid #b0bcbc"></div>
<svg class="a" style="left:94px;top:500px" width="7" height="8"><path d="M3.5 1.2V6.6M1.1 2.5L5.9 5.3M1.1 5.3L5.9 2.5" stroke="#000" stroke-width="1.0" stroke-linecap="round"/></svg>
<div class="a tx" style="left:152.3px;top:500px;transform:scaleX(1.017)">www</div>
<svg class="a" style="left:257px;top:500px" width="7" height="8"><path d="M3.5 1.2V6.6M1.1 2.5L5.9 5.3M1.1 5.3L5.9 2.5" stroke="#000" stroke-width="1.0" stroke-linecap="round"/></svg>
<svg class="a" style="left:323px;top:500px" width="7" height="8"><path d="M3.5 1.2V6.6M1.1 2.5L5.9 5.3M1.1 5.3L5.9 2.5" stroke="#000" stroke-width="1.0" stroke-linecap="round"/></svg>
<svg class="a" style="left:428px;top:500px" width="7" height="8"><path d="M3.5 1.2V6.6M1.1 2.5L5.9 5.3M1.1 5.3L5.9 2.5" stroke="#000" stroke-width="1.0" stroke-linecap="round"/></svg>
<div class="a tx dtx" style="left:573.8px;top:500px;width:150px;white-space:normal;transform:scaleX(1.062)">www -&gt; Internet</div>
<div class="a lbl" style="left:27px;top:500px;width:26px;height:26px;padding-top:-1px">8</div>
<div class="a gw" style="left:453px;top:498px;width:113px;height:17px"></div>
<div class="a gwt" style="left:455.7px;top:497.9px;transform:scaleX(0.995);transform-origin:0 0"><span class=one>1</span>92.<span class=one>1</span>68.AAA.<span class=one>1</span></div>
<svg class="a" style="left:65px;top:500px" width="11" height="11"><rect width="11" height="11" rx="2.5" fill="#00cc00"/><path d="M3 2 L9 5.5 L3 9Z" fill="#fff"/></svg>
<div class="a ai" style="left:735px;top:498px"><svg width="17" height="17" viewBox="0 0 17 17"><path d="M1.5 3 L13 2 L14 6 L8 10 L2 11 Z" fill="#6a6a6a" opacity=".6"/><path d="M3.6 8 L4.2 4.5 M5.8 6.8 L6.3 3.2 M8 6.3 L8.7 3.3 M10.2 6.8 L11.2 4.3" stroke="#fff" stroke-width="1.3" fill="none"/><path d="M7.8 11.3 L15 7.1 L15 15.1Z" fill="#000"/></svg></div>
<div class="a ai" style="left:754px;top:498px"><svg width="17" height="17" viewBox="0 0 17 17"><path d="M2 13 L6 9 L9 5 L13 2 L15 2 L15 6 L10 8 L8 15 L2 15Z" fill="#3a3a3a" opacity=".55"/><path d="M3.5 12.5 L12 3.5" stroke="#fff" stroke-width="1.8"/><text x="8.4" y="14.8" font-size="13" font-weight="bold" font-family="Liberation Sans" fill="#000">e</text></svg></div>
<div class="a ai" style="left:735px;top:517px"><svg width="17" height="17" viewBox="0 0 17 17"><path d="M2 2 L9 2 L12 6 L8 9 L3 8Z" fill="#777" opacity=".45"/><path d="M3 3 L6 4 L7 7" stroke="#fff" stroke-width="1.2" fill="none"/><path d="M9.3 8.7L14.6 14.1M14.6 8.7L9.3 14.1" stroke="#000" stroke-width="2.3"/></svg></div>
<div class="a ai" style="left:754px;top:517px"><svg width="17" height="17" viewBox="0 0 17 17"><rect x="3.2" y="3.5" width="9" height="11" fill="#fafafa" stroke="#999" stroke-width=".8"/><path d="M4.5 5.5H9.5M4.5 7.3H9.5M4.5 9.2H8" stroke="#777" stroke-width="1"/><path d="M8.1 11.2H15.9M12 7.2V15.1" stroke="#000" stroke-width="2.1"/></svg></div>
<div class="a td" style="left:88px;top:537px;width:58px"></div>
<div class="a td" style="left:146px;top:537px;width:105px"></div>
<div class="a td" style="left:251px;top:537px;width:66px"></div>
<div class="a td" style="left:317px;top:537px;width:105px"></div>
<div class="a td" style="left:422px;top:537px;width:67px"></div>
<div class="a td" style="left:489px;top:537px;width:79px"></div>
<div class="a td desc" style="left:568px;top:537px;width:160px;border-right:1px solid #b0bcbc"></div>
<svg class="a" style="left:94px;top:542px" width="7" height="8"><path d="M3.5 1.2V6.6M1.1 2.5L5.9 5.3M1.1 5.3L5.9 2.5" stroke="#000" stroke-width="1.0" stroke-linecap="round"/></svg>
<div class="a tx" style="left:152.3px;top:542px;transform:scaleX(0.9)">mail</div>
<svg class="a" style="left:257px;top:542px" width="7" height="8"><path d="M3.5 1.2V6.6M1.1 2.5L5.9 5.3M1.1 5.3L5.9 2.5" stroke="#000" stroke-width="1.0" stroke-linecap="round"/></svg>
<svg class="a" style="left:323px;top:542px" width="7" height="8"><path d="M3.5 1.2V6.6M1.1 2.5L5.9 5.3M1.1 5.3L5.9 2.5" stroke="#000" stroke-width="1.0" stroke-linecap="round"/></svg>
<svg class="a" style="left:428px;top:542px" width="7" height="8"><path d="M3.5 1.2V6.6M1.1 2.5L5.9 5.3M1.1 5.3L5.9 2.5" stroke="#000" stroke-width="1.0" stroke-linecap="round"/></svg>
<div class="a tx dtx" style="left:573.8px;top:542px;width:150px;white-space:normal;transform:scaleX(1.028)">mail -&gt; Internet</div>
<div class="a lbl" style="left:26px;top:542px;width:26px;height:27px;padding-top:0px">9</div>
<div class="a gw" style="left:453px;top:539px;width:113px;height:18px"></div>
<div class="a gwt" style="left:454.9px;top:539.9px;transform:scaleX(1.02);transform-origin:0 0"><span class=one>1</span>92.<span class=one>1</span>68.BBB.<span class=one>1</span></div>
<svg class="a" style="left:65px;top:542px" width="11" height="11"><rect width="11" height="11" rx="2.5" fill="#00cc00"/><path d="M3 2 L9 5.5 L3 9Z" fill="#fff"/></svg>
<div class="a ai" style="left:735px;top:540px"><svg width="17" height="17" viewBox="0 0 17 17"><path d="M1.5 3 L13 2 L14 6 L8 10 L2 11 Z" fill="#6a6a6a" opacity=".6"/><path d="M3.6 8 L4.2 4.5 M5.8 6.8 L6.3 3.2 M8 6.3 L8.7 3.3 M10.2 6.8 L11.2 4.3" stroke="#fff" stroke-width="1.3" fill="none"/><path d="M7.8 11.3 L15 7.1 L15 15.1Z" fill="#000"/></svg></div>
<div class="a ai" style="left:754px;top:540px"><svg width="17" height="17" viewBox="0 0 17 17"><path d="M2 13 L6 9 L9 5 L13 2 L15 2 L15 6 L10 8 L8 15 L2 15Z" fill="#3a3a3a" opacity=".55"/><path d="M3.5 12.5 L12 3.5" stroke="#fff" stroke-width="1.8"/><text x="8.4" y="14.8" font-size="13" font-weight="bold" font-family="Liberation Sans" fill="#000">e</text></svg></div>
<div class="a ai" style="left:735px;top:559px"><svg width="17" height="17" viewBox="0 0 17 17"><path d="M2 2 L9 2 L12 6 L8 9 L3 8Z" fill="#777" opacity=".45"/><path d="M3 3 L6 4 L7 7" stroke="#fff" stroke-width="1.2" fill="none"/><path d="M9.3 8.7L14.6 14.1M14.6 8.7L9.3 14.1" stroke="#000" stroke-width="2.3"/></svg></div>
<div class="a ai" style="left:754px;top:559px"><svg width="17" height="17" viewBox="0 0 17 17"><rect x="3.2" y="3.5" width="9" height="11" fill="#fafafa" stroke="#999" stroke-width=".8"/><path d="M4.5 5.5H9.5M4.5 7.3H9.5M4.5 9.2H8" stroke="#777" stroke-width="1"/><path d="M8.1 11.2H15.9M12 7.2V15.1" stroke="#000" stroke-width="2.1"/></svg></div>
<div class="a td" style="left:88px;top:579px;width:58px"></div>
<div class="a td" style="left:146px;top:579px;width:105px"></div>
<div class="a td" style="left:251px;top:579px;width:66px"></div>
<div class="a td" style="left:317px;top:579px;width:105px"></div>
<div class="a td" style="left:422px;top:579px;width:67px"></div>
<div class="a td" style="left:489px;top:579px;width:79px"></div>
<div class="a td desc" style="left:568px;top:579px;width:160px;border-right:1px solid #b0bcbc"></div>
<svg class="a" style="left:94px;top:584px" width="7" height="8"><path d="M3.5 1.2V6.6M1.1 2.5L5.9 5.3M1.1 5.3L5.9 2.5" stroke="#000" stroke-width="1.0" stroke-linecap="round"/></svg>
<div class="a tx" style="left:152.3px;top:584px;transform:scaleX(0.96)">s207</div>
<svg class="a" style="left:257px;top:584px" width="7" height="8"><path d="M3.5 1.2V6.6M1.1 2.5L5.9 5.3M1.1 5.3L5.9 2.5" stroke="#000" stroke-width="1.0" stroke-linecap="round"/></svg>
<svg class="a" style="left:323px;top:584px" width="7" height="8"><path d="M3.5 1.2V6.6M1.1 2.5L5.9 5.3M1.1 5.3L5.9 2.5" stroke="#000" stroke-width="1.0" stroke-linecap="round"/></svg>
<svg class="a" style="left:428px;top:584px" width="7" height="8"><path d="M3.5 1.2V6.6M1.1 2.5L5.9 5.3M1.1 5.3L5.9 2.5" stroke="#000" stroke-width="1.0" stroke-linecap="round"/></svg>
<div class="a tx dtx" style="left:573.8px;top:584px;width:150px;white-space:normal;transform:scaleX(1.053)">s-207 -&gt; Internet</div>
<div class="a lbl" style="left:27px;top:585px;width:27px;height:27px;padding-top:0px"><span class=one>1</span>0</div>
<div class="a gw" style="left:453px;top:581px;width:113px;height:18px"></div>
<div class="a gwt" style="left:454.9px;top:581.9px;transform:scaleX(1.02);transform-origin:0 0"><span class=one>1</span>92.<span class=one>1</span>68.BBB.<span class=one>1</span></div>
<svg class="a" style="left:65px;top:584px" width="11" height="11"><rect width="11" height="11" rx="2.5" fill="#00cc00"/><path d="M3 2 L9 5.5 L3 9Z" fill="#fff"/></svg>
<div class="a ai" style="left:735px;top:582px"><svg width="17" height="17" viewBox="0 0 17 17"><path d="M1.5 3 L13 2 L14 6 L8 10 L2 11 Z" fill="#6a6a6a" opacity=".6"/><path d="M3.6 8 L4.2 4.5 M5.8 6.8 L6.3 3.2 M8 6.3 L8.7 3.3 M10.2 6.8 L11.2 4.3" stroke="#fff" stroke-width="1.3" fill="none"/><path d="M7.8 11.3 L15 7.1 L15 15.1Z" fill="#000"/></svg></div>
<div class="a ai" style="left:754px;top:582px"><svg width="17" height="17" viewBox="0 0 17 17"><path d="M2 13 L6 9 L9 5 L13 2 L15 2 L15 6 L10 8 L8 15 L2 15Z" fill="#3a3a3a" opacity=".55"/><path d="M3.5 12.5 L12 3.5" stroke="#fff" stroke-width="1.8"/><text x="8.4" y="14.8" font-size="13" font-weight="bold" font-family="Liberation Sans" fill="#000">e</text></svg></div>
<div class="a ai" style="left:735px;top:601px"><svg width="17" height="17" viewBox="0 0 17 17"><path d="M2 2 L9 2 L12 6 L8 9 L3 8Z" fill="#777" opacity=".45"/><path d="M3 3 L6 4 L7 7" stroke="#fff" stroke-width="1.2" fill="none"/><path d="M9.3 8.7L14.6 14.1M14.6 8.7L9.3 14.1" stroke="#000" stroke-width="2.3"/></svg></div>
<div class="a ai" style="left:754px;top:601px"><svg width="17" height="17" viewBox="0 0 17 17"><rect x="3.2" y="3.5" width="9" height="11" fill="#fafafa" stroke="#999" stroke-width=".8"/><path d="M4.5 5.5H9.5M4.5 7.3H9.5M4.5 9.2H8" stroke="#777" stroke-width="1"/><path d="M8.1 11.2H15.9M12 7.2V15.1" stroke="#000" stroke-width="2.1"/></svg></div>
<div class="a td" style="left:88px;top:621px;width:58px"></div>
<div class="a td" style="left:146px;top:621px;width:105px"></div>
<div class="a td" style="left:251px;top:621px;width:66px"></div>
<div class="a td" style="left:317px;top:621px;width:105px"></div>
<div class="a td" style="left:422px;top:621px;width:67px"></div>
<div class="a td" style="left:489px;top:621px;width:79px"></div>
<div class="a td desc" style="left:568px;top:621px;width:160px;border-right:1px solid #b0bcbc"></div>
<svg class="a" style="left:94px;top:626px" width="7" height="8"><path d="M3.5 1.2V6.6M1.1 2.5L5.9 5.3M1.1 5.3L5.9 2.5" stroke="#000" stroke-width="1.0" stroke-linecap="round"/></svg>
<div class="a tx" style="left:152.3px;top:626px;transform:scaleX(0.966)">s18</div>
<svg class="a" style="left:257px;top:626px" width="7" height="8"><path d="M3.5 1.2V6.6M1.1 2.5L5.9 5.3M1.1 5.3L5.9 2.5" stroke="#000" stroke-width="1.0" stroke-linecap="round"/></svg>
<svg class="a" style="left:323px;top:626px" width="7" height="8"><path d="M3.5 1.2V6.6M1.1 2.5L5.9 5.3M1.1 5.3L5.9 2.5" stroke="#000" stroke-width="1.0" stroke-linecap="round"/></svg>
<svg class="a" style="left:428px;top:626px" width="7" height="8"><path d="M3.5 1.2V6.6M1.1 2.5L5.9 5.3M1.1 5.3L5.9 2.5" stroke="#000" stroke-width="1.0" stroke-linecap="round"/></svg>
<div class="a tx dtx" style="left:573.8px;top:626px;width:150px;white-space:normal;transform:scaleX(1.057)">s-18 -&gt; Internet</div>
<div class="a lbl" style="left:27px;top:625px;width:26px;height:28px;padding-top:1px"><span class=one>1</span><span class=one>1</span></div>
<div class="a gw" style="left:452px;top:623px;width:115px;height:18px"></div>
<div class="a gwt" style="left:454.9px;top:623.9px;transform:scaleX(1.0);transform-origin:0 0"><span class=one>1</span>92.<span class=one>1</span>68.CCC.<span class=one>1</span></div>
<svg class="a" style="left:65px;top:626px" width="11" height="11"><rect width="11" height="11" rx="2.5" fill="#00cc00"/><path d="M3 2 L9 5.5 L3 9Z" fill="#fff"/></svg>
<div class="a ai" style="left:735px;top:624px"><svg width="17" height="17" viewBox="0 0 17 17"><path d="M1.5 3 L13 2 L14 6 L8 10 L2 11 Z" fill="#6a6a6a" opacity=".6"/><path d="M3.6 8 L4.2 4.5 M5.8 6.8 L6.3 3.2 M8 6.3 L8.7 3.3 M10.2 6.8 L11.2 4.3" stroke="#fff" stroke-width="1.3" fill="none"/><path d="M7.8 11.3 L15 7.1 L15 15.1Z" fill="#000"/></svg></div>
<div class="a ai" style="left:754px;top:624px"><svg width="17" height="17" viewBox="0 0 17 17"><path d="M2 13 L6 9 L9 5 L13 2 L15 2 L15 6 L10 8 L8 15 L2 15Z" fill="#3a3a3a" opacity=".55"/><path d="M3.5 12.5 L12 3.5" stroke="#fff" stroke-width="1.8"/><text x="8.4" y="14.8" font-size="13" font-weight="bold" font-family="Liberation Sans" fill="#000">e</text></svg></div>
<div class="a ai" style="left:735px;top:643px"><svg width="17" height="17" viewBox="0 0 17 17"><path d="M2 2 L9 2 L12 6 L8 9 L3 8Z" fill="#777" opacity=".45"/><path d="M3 3 L6 4 L7 7" stroke="#fff" stroke-width="1.2" fill="none"/><path d="M9.3 8.7L14.6 14.1M14.6 8.7L9.3 14.1" stroke="#000" stroke-width="2.3"/></svg></div>
<div class="a ai" style="left:754px;top:643px"><svg width="17" height="17" viewBox="0 0 17 17"><rect x="3.2" y="3.5" width="9" height="11" fill="#fafafa" stroke="#999" stroke-width=".8"/><path d="M4.5 5.5H9.5M4.5 7.3H9.5M4.5 9.2H8" stroke="#777" stroke-width="1"/><path d="M8.1 11.2H15.9M12 7.2V15.1" stroke="#000" stroke-width="2.1"/></svg></div>
<div class="a td" style="left:88px;top:663px;width:58px"></div>
<div class="a td" style="left:146px;top:663px;width:105px"></div>
<div class="a td" style="left:251px;top:663px;width:66px"></div>
<div class="a td" style="left:317px;top:663px;width:105px"></div>
<div class="a td" style="left:422px;top:663px;width:67px"></div>
<div class="a td" style="left:489px;top:663px;width:79px"></div>
<div class="a td desc" style="left:568px;top:663px;width:160px;border-right:1px solid #b0bcbc"></div>
<svg class="a" style="left:94px;top:668px" width="7" height="8"><path d="M3.5 1.2V6.6M1.1 2.5L5.9 5.3M1.1 5.3L5.9 2.5" stroke="#000" stroke-width="1.0" stroke-linecap="round"/></svg>
<div class="a tx" style="left:152.3px;top:668px;transform:scaleX(0.96)">s204</div>
<svg class="a" style="left:257px;top:668px" width="7" height="8"><path d="M3.5 1.2V6.6M1.1 2.5L5.9 5.3M1.1 5.3L5.9 2.5" stroke="#000" stroke-width="1.0" stroke-linecap="round"/></svg>
<svg class="a" style="left:323px;top:668px" width="7" height="8"><path d="M3.5 1.2V6.6M1.1 2.5L5.9 5.3M1.1 5.3L5.9 2.5" stroke="#000" stroke-width="1.0" stroke-linecap="round"/></svg>
<svg class="a" style="left:428px;top:668px" width="7" height="8"><path d="M3.5 1.2V6.6M1.1 2.5L5.9 5.3M1.1 5.3L5.9 2.5" stroke="#000" stroke-width="1.0" stroke-linecap="round"/></svg>
<div class="a tx dtx" style="left:573.8px;top:668px;width:150px;white-space:normal;transform:scaleX(1.053)">s-204 -&gt; Internet</div>
<div class="a lbl" style="left:26px;top:668px;width:27px;height:27px;padding-top:0px"><span class=one>1</span>2</div>
<div class="a gw" style="left:453px;top:665px;width:113px;height:18px"></div>
<div class="a gwt" style="left:454.9px;top:665.9px;transform:scaleX(1.02);transform-origin:0 0"><span class=one>1</span>92.<span class=one>1</span>68.BBB.<span class=one>1</span></div>
<svg class="a" style="left:65px;top:668px" width="11" height="11"><rect width="11" height="11" rx="2.5" fill="#00cc00"/><path d="M3 2 L9 5.5 L3 9Z" fill="#fff"/></svg>
<div class="a ai" style="left:735px;top:666px"><svg width="17" height="17" viewBox="0 0 17 17"><path d="M1.5 3 L13 2 L14 6 L8 10 L2 11 Z" fill="#6a6a6a" opacity=".6"/><path d="M3.6 8 L4.2 4.5 M5.8 6.8 L6.3 3.2 M8 6.3 L8.7 3.3 M10.2 6.8 L11.2 4.3" stroke="#fff" stroke-width="1.3" fill="none"/><path d="M7.8 11.3 L15 7.1 L15 15.1Z" fill="#000"/></svg></div>
<div class="a ai" style="left:754px;top:666px"><svg width="17" height="17" viewBox="0 0 17 17"><path d="M2 13 L6 9 L9 5 L13 2 L15 2 L15 6 L10 8 L8 15 L2 15Z" fill="#3a3a3a" opacity=".55"/><path d="M3.5 12.5 L12 3.5" stroke="#fff" stroke-width="1.8"/><text x="8.4" y="14.8" font-size="13" font-weight="bold" font-family="Liberation Sans" fill="#000">e</text></svg></div>
<div class="a ai" style="left:735px;top:685px"><svg width="17" height="17" viewBox="0 0 17 17"><path d="M2 2 L9 2 L12 6 L8 9 L3 8Z" fill="#777" opacity=".45"/><path d="M3 3 L6 4 L7 7" stroke="#fff" stroke-width="1.2" fill="none"/><path d="M9.3 8.7L14.6 14.1M14.6 8.7L9.3 14.1" stroke="#000" stroke-width="2.3"/></svg></div>
<div class="a ai" style="left:754px;top:685px"><svg width="17" height="17" viewBox="0 0 17 17"><rect x="3.2" y="3.5" width="9" height="11" fill="#fafafa" stroke="#999" stroke-width=".8"/><path d="M4.5 5.5H9.5M4.5 7.3H9.5M4.5 9.2H8" stroke="#777" stroke-width="1"/><path d="M8.1 11.2H15.9M12 7.2V15.1" stroke="#000" stroke-width="2.1"/></svg></div>
</body></html>
